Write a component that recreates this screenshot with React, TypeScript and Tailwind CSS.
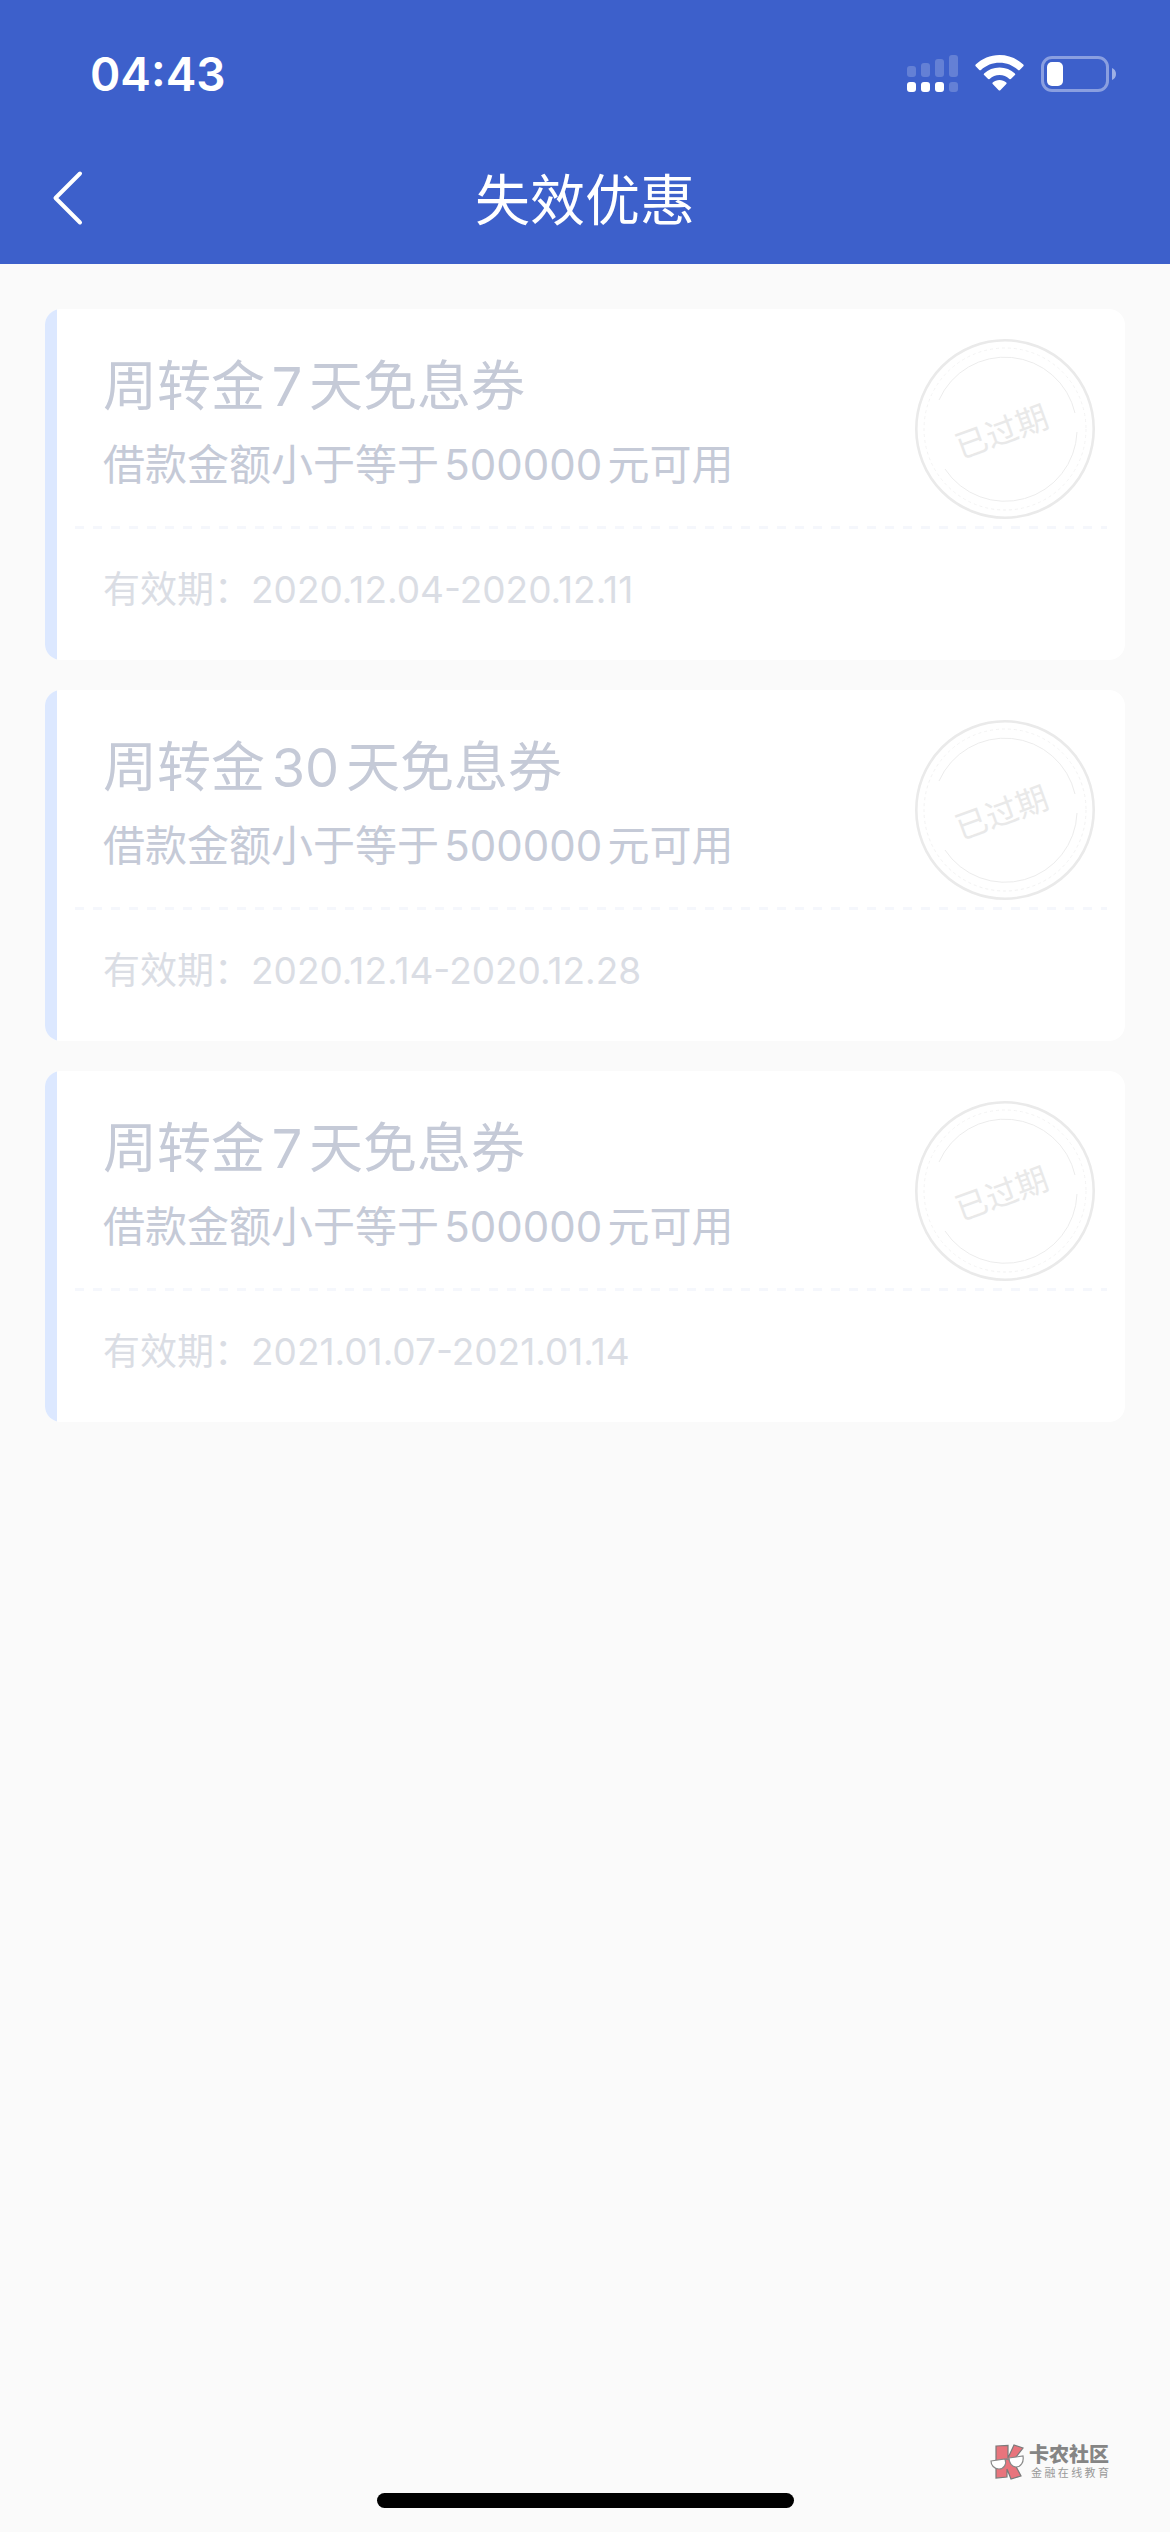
const coupons = [
  {
    id: 1,
    title: "周转金7天免息券",
    desc: "借款金额小于等于500000元可用",
    period: "2020.12.04-2020.12.11",
  },
  {
    id: 2,
    title: "周转金30天免息券",
    desc: "借款金额小于等于500000元可用",
    period: "2020.12.14-2020.12.28",
  },
  {
    id: 3,
    title: "周转金7天免息券",
    desc: "借款金额小于等于500000元可用",
    period: "2021.01.07-2021.01.14",
  },
];

function SignalIcon() {
  return (
    <svg width="51" height="38" viewBox="0 0 51 38" fill="#fff" aria-hidden="true">
      <g opacity="0.2">
        <rect x="0" y="11" width="9" height="11" rx="3" />
        <rect x="14" y="8" width="9" height="14" rx="3" />
        <rect x="28" y="4" width="9" height="18" rx="3" />
        <rect x="42" y="0" width="9" height="22" rx="3" />
        <rect x="42" y="27" width="9" height="10" rx="3" />
      </g>
      <rect x="0" y="27" width="9" height="10" rx="3" />
      <rect x="14" y="27" width="9" height="10" rx="3" />
      <rect x="28" y="27" width="9" height="10" rx="3" />
    </svg>
  );
}

function WifiIcon() {
  return (
    <svg width="49" height="38" viewBox="0 0 49 38" fill="#fff" aria-hidden="true">
      <path d="M24.5 0C33.700 0 42 3.500 48.300 9.600C48.800 10.100 48.800 10.800 48.300 11.300L44.700 14.900C44.200 15.400 43.500 15.400 43 14.900C38 10.300 31.500 7.700 24.500 7.700S11 10.300 6 14.900C5.500 15.400 4.800 15.400 4.300 14.900L.7 11.300C.2 10.800 .2 10.100 .7 9.600C7 3.500 15.300 0 24.500 0Z" />
      <path d="M24.500 12.500C30.500 12.500 35.800 14.700 39.900 18.400C40.400 18.900 40.400 19.600 39.900 20.100L36.100 23.800C35.600 24.300 35 24.300 34.400 23.900C31.700 21.500 28.300 20.100 24.500 20.100S17.300 21.500 14.600 23.900C14 24.300 13.400 24.300 12.900 23.800L9.100 20.100C8.600 19.600 8.600 18.900 9.100 18.400C13.200 14.700 18.500 12.500 24.500 12.500Z" />
      <path d="M24.500 25C27.100 25 29.500 25.900 31.300 27.500C31.800 28 31.800 28.600 31.300 29.100L25.300 35.200C24.800 35.700 24.200 35.700 23.700 35.200L17.700 29.100C17.200 28.600 17.200 28 17.700 27.500C19.500 25.900 21.900 25 24.500 25Z" />
    </svg>
  );
}

function BatteryIcon() {
  return (
    <svg width="75" height="36" viewBox="0 0 75 36" aria-hidden="true">
      <rect x="1.500" y="1.500" width="65" height="33" rx="9.500" fill="none" stroke="#fff" strokeOpacity="0.4" strokeWidth="3" />
      <path d="M71 12C73.500 13 75 15.300 75 18S73.500 23 71 24Z" fill="#fff" fillOpacity="0.5" />
      <rect x="6" y="6" width="16" height="24" rx="5" fill="#fff" />
    </svg>
  );
}

function ExpiredStamp() {
  return (
    <div className="relative grid size-[180px] shrink-0 place-items-center">
      <svg viewBox="0 0 180 180" fill="none" className="absolute inset-0" aria-hidden="true">
        <circle cx="90" cy="90" r="88.700" stroke="#eaeaea" strokeWidth="2.600" />
        <circle cx="90" cy="90" r="81" stroke="#f3f3f3" strokeWidth="1" strokeDasharray="3 3" />
        <path d="M24 61A72 72 0 0 1 160 74" stroke="#ececec" strokeWidth="1" />
        <path d="M162 93A72 72 0 0 1 30 130" stroke="#ececec" strokeWidth="1" />
      </svg>
      <span className="-rotate-20 pt-1 pr-2 text-[32px] leading-none text-[#e9e9e9]">已过期</span>
    </div>
  );
}

function CouponCard({ title, desc, period }: { title: string; desc: string; period: string }) {
  return (
    <li className="flex overflow-hidden rounded-[16px] bg-white">
      <div className="w-3 bg-[#dce8ff]" />
      <div className="flex-1">
        <div className="flex h-[217px] items-start justify-between pt-[30px] pr-[30px] pl-[46px] text-[#c5cad7]">
          <div className="[text-autospace:normal]">
            <h2 className="pt-2 text-[54px] leading-[80px]">{title}</h2>
            <p className="text-[42px] leading-[76px]">{desc}</p>
          </div>
          <ExpiredStamp />
        </div>
        <div className="mx-[18px] h-[3px] bg-[repeating-linear-gradient(90deg,#f5f7fc_0_9px,transparent_9px_18px)]" />
        <p className="pb-[9px] pl-[46px] text-[37px] leading-[122px] text-[#dadde4]">
          有效期：<time>{period}</time>
        </p>
      </div>
    </li>
  );
}

function Watermark() {
  return (
    <div className="flex items-center gap-1">
      <svg width="35" height="36" viewBox="0 0 35 36" aria-hidden="true">
        <path d="M6 2L18 1.500V14L24 1L33 4L23 17L31 32L21 35L17 25V33L6 34Z" fill="#e8747c" stroke="#7a7a7a" strokeWidth="1.200" />
        <path d="M1 17L15 15C17 20 14 25 9 25C4 25 1 21 1 17Z" fill="#fff" stroke="#888" strokeWidth="1.200" />
        <path d="M19 14L33 12C34 18 31 23 26 23C22 23 19 19 19 14Z" fill="#fff" stroke="#888" strokeWidth="1.200" />
        <path d="M15 16Q17 14 19 16" fill="none" stroke="#888" strokeWidth="1.500" />
      </svg>
      <div className="w-[80px]">
        <p className="text-[20px] leading-[22px] font-black text-[#858585]">卡农社区</p>
        <p className="flex justify-between pl-[2px] text-[11px] leading-[14px] text-[#999]">
          {[..."金融在线教育"].map((char) => (
            <span key={char}>{char}</span>
          ))}
        </p>
      </div>
    </div>
  );
}

export default function App() {
  return (
    <div className="flex min-h-screen flex-col bg-[#fafafa] font-[Inter,'Noto_Sans_CJK_SC',sans-serif]">
      <header className="bg-[#3d60cb] text-white">
        <div className="flex h-[132px] items-center justify-between pt-[16px] pr-[54px] pl-[90px]">
          <span className="text-[46px] leading-none font-semibold">04:43</span>
          <div className="flex items-center gap-[17px]">
            <SignalIcon />
            <WifiIcon />
            <BatteryIcon />
          </div>
        </div>
        <div className="grid h-[132px] grid-cols-[1fr_auto_1fr] items-center px-[45px]">
          <button type="button" aria-label="返回" className="w-[45px] cursor-pointer">
            <svg width="45" height="60" viewBox="0 0 45 60" fill="none" stroke="#fff" strokeWidth="4" strokeLinecap="round" strokeLinejoin="round">
              <path d="M35 5.500L10.500 30L35 54.500" />
            </svg>
          </button>
          <h1 className="pt-1 text-[55px] leading-none">失效优惠</h1>
        </div>
      </header>

      <main className="flex-1 px-[45px] pt-[45px]">
        <ul className="flex flex-col gap-[30px]">
          {coupons.map((coupon) => (
            <CouponCard key={coupon.id} title={coupon.title} desc={coupon.desc} period={coupon.period} />
          ))}
        </ul>
      </main>

      <footer className="flex flex-col gap-[13px] pb-[24px]">
        <div className="flex justify-end pr-[61px]">
          <Watermark />
        </div>
        <div className="mx-auto h-[15px] w-[417px] rounded-full bg-black" />
      </footer>
    </div>
  );
}
